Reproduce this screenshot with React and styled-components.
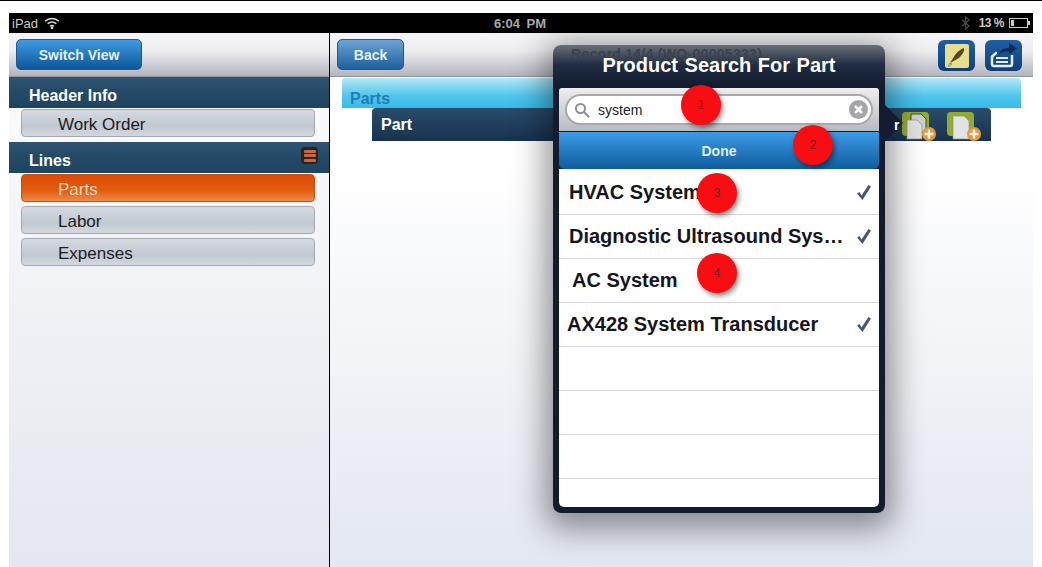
import React from 'react';
import styled, { createGlobalStyle } from 'styled-components';

const items = [
  { label: 'HVAC System', checked: true },
  { label: 'Diagnostic Ultrasound Sys…', checked: true },
  { label: 'AC System', checked: false, indent: 3 },
  { label: 'AX428 System Transducer', checked: true, indent: -2 },
  {},
  {},
  {},
];

const WifiIcon = () => (
  <svg width="16" height="12" viewBox="0 0 16 12" fill="none" stroke="#d8d8d8" strokeWidth="1.5">
    <path d="M1 4.2c4-3.6 10-3.6 14 0" />
    <path d="M3.6 6.8c2.6-2.2 6.2-2.2 8.8 0" />
    <path d="M6 9.2c1.2-.9 2.8-.9 4 0" />
    <circle cx="8" cy="10.8" r=".6" fill="#d8d8d8" />
  </svg>
);

const BluetoothIcon = () => (
  <svg width="9" height="14" viewBox="0 0 9 14" fill="none" stroke="#4c4c4c" strokeWidth="1.2">
    <path d="M1 4l7 6-3.5 3V1L8 4l-7 6" />
  </svg>
);

const BatteryIcon = () => (
  <svg width="21" height="10" viewBox="0 0 21 10">
    <rect x=".5" y=".5" width="18" height="9" fill="none" stroke="#ccc" />
    <rect x="2" y="2" width="3" height="6" fill="#ccc" />
    <rect x="19" y="3" width="2" height="4" fill="#ccc" />
  </svg>
);

const PenIcon = () => (
  <svg width="37" height="32" viewBox="0 0 37 32">
    <rect x="7" y="4" width="24" height="24" rx="2" fill="#e7df8e" />
    <path d="M12 23l5-8c2-3 6-6 9-7 1 3-2 7-5 10z" fill="#5c4526" />
    <path d="M12 23l-2 3 1 .5 3-2.5z" fill="#d8d8d8" stroke="#444" strokeWidth=".5" />
  </svg>
);

const ExportIcon = () => (
  <svg width="37" height="32" viewBox="0 0 37 32" fill="none">
    <path d="M12 13h-1L7 16.5V24a2 2 0 0 0 2 2h16a2 2 0 0 0 2-2V15" stroke="#e8eef5" strokeWidth="2.5" />
    <rect x="11" y="17" width="12" height="2" fill="#e8eef5" />
    <rect x="11" y="21" width="12" height="2" fill="#e8eef5" />
    <path d="M14 14c1-4 5-6 10-6V3l8 5.500-8 6v-3c-4 0-7 .5-10 2.500z" fill="#0f2c52" />
  </svg>
);

const AddDocsIcon = ({ stacked }) => (
  <svg width="36" height="30" viewBox="0 0 36 30">
    <rect x="0" y="0" width="27" height="24" rx="4" fill="#8fae2d" />
    {stacked && <path d="M9 2h10l5 5v13H9z" fill="#cfcfcf" stroke="#3d3d3d" strokeWidth=".9" />}
    <path
      d={stacked ? 'M5 8h10l5 5v14H5z' : 'M6 4h11l5 5v18H6z'}
      fill="#e2e2e2"
      stroke="#8f8f8f"
      strokeWidth=".7"
    />
    <circle cx="27" cy="22" r="7" fill="#e39a3f" />
    <path d="M27 17.5v9M22.5 22h9" stroke="#fdf2dc" strokeWidth="2.5" />
  </svg>
);

const SearchIcon = () => (
  <svg width="16" height="16" viewBox="0 0 16 16" fill="none" stroke="#8a8f96" strokeWidth="2">
    <circle cx="6.5" cy="6.5" r="4.5" />
    <path d="M10 10l4.500 4.500" strokeLinecap="round" />
  </svg>
);

const ClearIcon = () => (
  <svg width="19" height="19" viewBox="0 0 19 19">
    <circle cx="9.5" cy="9.5" r="9.5" fill="#a3a5a8" />
    <path d="M6 6l7 7M13 6l-7 7" stroke="#fff" strokeWidth="2.5" />
  </svg>
);

const CheckIcon = () => (
  <svg width="16" height="17" viewBox="0 0 16 17">
    <path d="M1 9.5l2.500-1.500 2 3.500L12.500 1 15 2.500 6.500 16z" fill="#44567f" />
  </svg>
);

const App = () => (
  <>
    <GlobalStyle />
    <Frame>
      <StatusBar>
        <StatusSide>
          iPad <WifiIcon />
        </StatusSide>
        <Clock>6:04 PM</Clock>
        <StatusSide $right>
          <BluetoothIcon />
          <Battery>13 %</Battery>
          <BatteryIcon />
        </StatusSide>
      </StatusBar>
      <Body>
        <Sidebar>
          <Toolbar>
            <BlueButton $width={126}>Switch View</BlueButton>
          </Toolbar>
          <SectionHeader>Header Info</SectionHeader>
          <NavList>
            <NavItem>Work Order</NavItem>
          </NavList>
          <SectionHeader>
            Lines
            <MenuBadge>
              <i />
              <i />
              <i />
            </MenuBadge>
          </SectionHeader>
          <NavList>
            <NavItem $active>Parts</NavItem>
            <NavItem>Labor</NavItem>
            <NavItem>Expenses</NavItem>
          </NavList>
        </Sidebar>
        <Main>
          <MainToolbar>
            <BlueButton $width={67} $pale>
              Back
            </BlueButton>
            <ToolIcons>
              <ToolIcon>
                <PenIcon />
              </ToolIcon>
              <ToolIcon>
                <ExportIcon />
              </ToolIcon>
            </ToolIcons>
          </MainToolbar>
          <Accordion>Parts</Accordion>
          <PartHeader>
            Part
            <PartIcons>
              <AddDocsIcon stacked />
              <AddDocsIcon />
            </PartIcons>
          </PartHeader>
          <Popover>
            <Arrow />
            <GhostTitle>Record 14/4 (WO-00005333)</GhostTitle>
            <PopoverTitle>Product Search For Part</PopoverTitle>
            <SearchArea>
              <SearchField>
                <SearchIcon />
                <SearchText>system</SearchText>
                <ClearIcon />
              </SearchField>
            </SearchArea>
            <DoneButton>Done</DoneButton>
            <ResultList>
              {items.map((item, i) => (
                <ResultRow key={i} $indent={item.indent}>
                  <span>{item.label}</span>
                  {item.checked && <CheckIcon />}
                </ResultRow>
              ))}
            </ResultList>
          </Popover>
          <ClippedLabel>r</ClippedLabel>
          <Marker $left={351} $top={52}>1</Marker>
          <Marker $left={463} $top={92}>2</Marker>
          <Marker $left={367} $top={140}>3</Marker>
          <Marker $left={367} $top={220}>4</Marker>
        </Main>
      </Body>
    </Frame>
  </>
);

export default App;

const GlobalStyle = createGlobalStyle`
  html, body {
    margin: 0;
    height: 100%;
    overflow: hidden;
    background: #fff;
    font-family: "Liberation Sans", Arial, sans-serif;
  }
`;

const Frame = styled.div`
  height: 567px;
  box-sizing: border-box;
  padding: 13px 9px 0;
  border-top: 1px solid #000;
  display: flex;
  flex-direction: column;
  width: 1042px;
`;

const StatusBar = styled.div`
  height: 20px;
  margin-top: -1px;
  flex: none;
  background: #000;
  color: #c9c9c9;
  font-size: 13px;
  display: grid;
  grid-template-columns: 1fr auto 1fr;
  align-items: center;
  padding: 0 3px;
`;

const StatusSide = styled.div`
  display: flex;
  align-items: center;
  gap: ${p => (p.$right ? '5px' : '6px')};
  justify-content: ${p => (p.$right ? 'flex-end' : 'flex-start')};
`;

const Battery = styled.span`
  font-size: 12px;
  font-weight: bold;
  letter-spacing: -0.5px;
  margin-left: 4px;
`;

const Clock = styled.div`
  font-weight: bold;
  font-size: 13px;
  color: #a8a8a8;
  word-spacing: 3px;
  margin-left: -2px;
`;

const Body = styled.div`
  flex: 1;
  display: flex;
  min-height: 0;
  border-radius: 5px 5px 0 0;
  overflow: hidden;
`;

const Sidebar = styled.div`
  width: 320px;
  flex: none;
  border-right: 1px solid #000;
  background: linear-gradient(#fbfbfc 8%, #e4e7ef 100%);
`;

const Toolbar = styled.div`
  height: 44px;
  box-sizing: border-box;
  padding: 6px 7px;
  background: linear-gradient(#f4f4f6 0%, #efeff2 40%, #b4b4be 100%);
  border-bottom: 1px solid #8f959e;
`;

const BlueButton = styled.div`
  width: ${p => p.$width}px;
  height: 31px;
  border-radius: 5px;
  box-sizing: border-box;
  border: 1px solid #1c5a90;
  background: ${p =>
    p.$pale
      ? 'linear-gradient(#6ba3d6, #1e5f9e)'
      : 'linear-gradient(#3f9be2, #0c5699)'};
  color: #e6f0f8;
  font-weight: bold;
  font-size: 14px;
  display: flex;
  align-items: center;
  justify-content: center;
`;

const SectionHeader = styled.div`
  height: 31px;
  background: linear-gradient(#2f5472, #254a68 45%, #1f4462);
  color: #fff;
  font-weight: bold;
  font-size: 16px;
  padding: 10px 20px 0;
  box-sizing: border-box;
  display: flex;
  justify-content: space-between;
  position: relative;
`;

const MenuBadge = styled.div`
  position: absolute;
  right: 11px;
  top: 5px;
  width: 17px;
  height: 17px;
  background: #2b2320;
  border-radius: 4px;
  display: flex;
  flex-direction: column;
  gap: 1.5px;
  align-items: center;
  justify-content: center;

  i {
    display: block;
    width: 12px;
    height: 3px;
    border-radius: 1px;
    background: #c9683a;
  }
`;

const NavList = styled.div`
  padding: 1px 14px 5px 12px;
  display: flex;
  flex-direction: column;
  gap: 4px;
`;

const NavItem = styled.div`
  height: 28px;
  box-sizing: border-box;
  border-radius: 4px;
  padding: 4px 0 0 36px;
  font-size: 17px;
  display: flex;
  align-items: center;
  color: ${p => (p.$active ? '#f5dcc0' : '#1c1c1c')};
  background: ${p =>
    p.$active
      ? 'linear-gradient(#dc4a06, #e25c10 60%, #ef8a4b)'
      : 'linear-gradient(#d6dbe2, #c2c8d1 60%, #d3d8df)'};
  border: 1px solid ${p => (p.$active ? '#c94f14' : '#a4a9b2')};
`;

const Main = styled.div`
  flex: 1;
  position: relative;
  background: linear-gradient(#ffffff 25%, #e3e7f0 100%);
`;

const MainToolbar = styled(Toolbar)`
  display: flex;
  justify-content: space-between;
  padding: 6px 11px 6px 7px;
`;

const ToolIcons = styled.div`
  display: flex;
  gap: 10px;
  margin-top: 1px;
`;

const ToolIcon = styled.div`
  width: 37px;
  height: 31px;
  border-radius: 6px;
  background: linear-gradient(#1f5fa5, #0d3f78);
  display: flex;
  align-items: center;
  justify-content: center;
  overflow: hidden;
`;

const Accordion = styled.div`
  margin: 1px 12px 0;
  height: 30px;
  box-sizing: border-box;
  padding: 12px 0 0 8px;
  border-radius: 4px 4px 0 0;
  background: linear-gradient(#b5e8f6, #4fc6ee 60%, #38bbe8);
  color: #1f7fb5;
  font-weight: bold;
  font-size: 16px;
  line-height: 18px;
`;

const PartHeader = styled.div`
  margin: 0 42px;
  height: 33px;
  padding-left: 9px;
  box-sizing: border-box;
  border-radius: 4px 4px 0 0;
  background: linear-gradient(#2a4c6c, #17324e);
  color: #fff;
  font-weight: bold;
  font-size: 16px;
  display: flex;
  align-items: center;
  justify-content: space-between;
`;

const PartIcons = styled.div`
  display: flex;
  gap: 9px;
  margin: 4px 8px 0 0;
  align-self: flex-start;
`;

const Popover = styled.div`
  position: absolute;
  left: 223px;
  top: 12px;
  width: 332px;
  height: 468px;
  box-sizing: border-box;
  padding: 0 6px 6px;
  border-radius: 8px;
  background: linear-gradient(#6a7078 0, #1f2c42 20px, #131b2e 43px);
  box-shadow: 0 8px 32px 8px rgba(0, 0, 0, 0.42);
  display: flex;
  flex-direction: column;
`;

const Arrow = styled.div`
  position: absolute;
  left: 100%;
  top: 60px;
  width: 0;
  height: 0;
  border-top: 18px solid transparent;
  border-bottom: 18px solid transparent;
  border-left: 18px solid #131b2e;
`;

const ClippedLabel = styled.span`
  position: absolute;
  left: 564px;
  top: 84px;
  color: #fff;
  font-weight: bold;
  font-size: 14px;
`;

const GhostTitle = styled.div`
  position: absolute;
  left: 18px;
  top: 1px;
  font-size: 14px;
  font-weight: bold;
  letter-spacing: 0.3px;
  color: #3b414d;
  white-space: nowrap;
`;

const PopoverTitle = styled.div`
  height: 43px;
  flex: none;
  color: #fff;
  font-weight: bold;
  font-size: 20px;
  text-align: center;
  line-height: 41px;
  word-spacing: 1px;
  position: relative;
`;

const SearchArea = styled.div`
  height: 43px;
  flex: none;
  box-sizing: border-box;
  padding: 6px 6px;
  background: linear-gradient(#eeeef0, #b9b9c0);
  border-radius: 3px 3px 0 0;
`;

const SearchField = styled.div`
  height: 31px;
  box-sizing: border-box;
  border-radius: 16px;
  border: 2px solid #a9a9ad;
  background: #fff;
  display: flex;
  align-items: center;
  padding: 0 3px 0 7px;
`;

const SearchText = styled.span`
  flex: 1;
  font-size: 14px;
  color: #222;
  margin-left: 8px;
`;

const DoneButton = styled.div`
  height: 37px;
  flex: none;
  margin-top: 1px;
  border-radius: 0 0 5px 5px;
  background: linear-gradient(#3d9ae6, #0f5c9c);
  color: #dff0fb;
  font-weight: bold;
  font-size: 14px;
  display: flex;
  align-items: center;
  justify-content: center;
`;

const ResultList = styled.div`
  flex: 1;
  background: #fff;
  border-radius: 0 0 5px 5px;
  overflow: hidden;
  padding-top: 2px;
`;

const ResultRow = styled.div`
  height: 44px;
  box-sizing: border-box;
  border-bottom: 1px solid #d9d9d9;
  padding: 0 7px 0 ${p => 10 + (p.$indent || 0)}px;
  display: flex;
  align-items: center;
  justify-content: space-between;
  color: #15151c;
  font-weight: bold;
  font-size: 20px;
  white-space: nowrap;
`;

const Marker = styled.div`
  position: absolute;
  left: ${p => p.$left}px;
  top: ${p => p.$top}px;
  width: 40px;
  height: 40px;
  border-radius: 50%;
  background: #f80d12;
  color: #7a1518;
  font-size: 12px;
  display: flex;
  align-items: center;
  justify-content: center;
  box-shadow: 2px 3px 5px rgba(0, 0, 0, 0.45);
`;
